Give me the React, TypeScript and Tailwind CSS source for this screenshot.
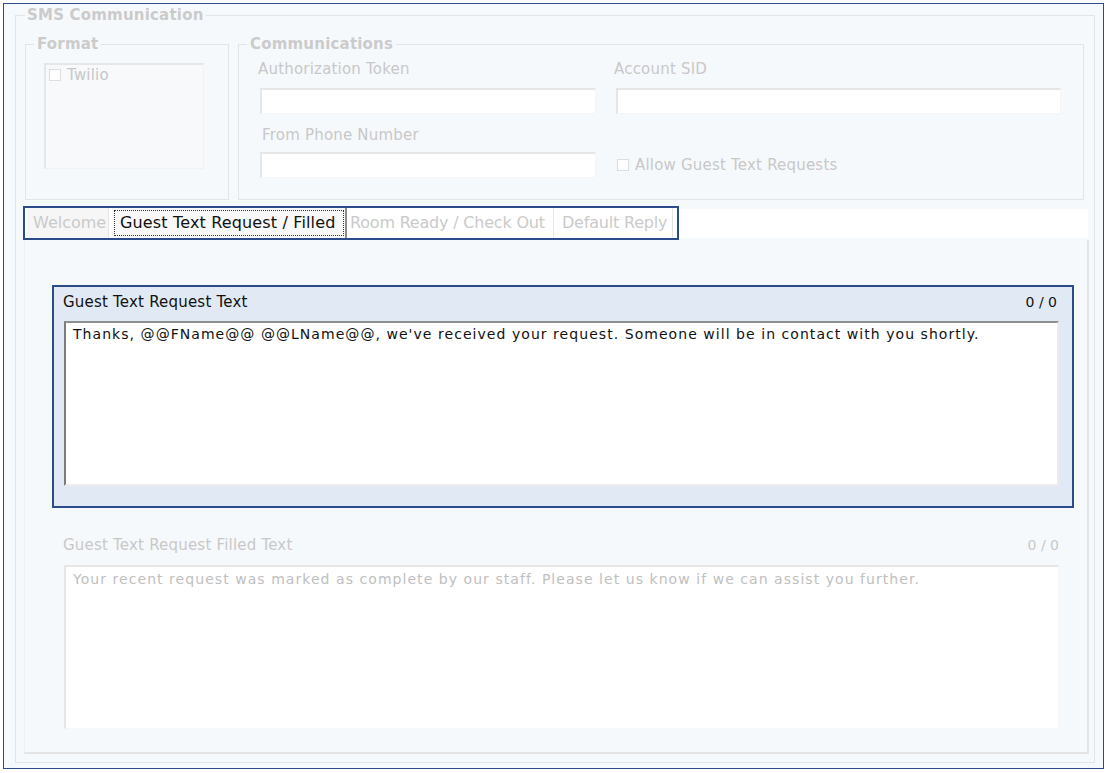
import React from "react";

const SANS = "font-['DejaVu_Sans',sans-serif]";
const LBL = "text-[15px] tracking-[0.2px] leading-[18px]";
const TAB = "text-[16px] whitespace-nowrap";

function Check({ label, className = "" }: { label: string; className?: string }) {
  return (
    <div className={`flex items-center ${className}`}>
      <span className="w-[12px] h-[12px] border border-[#dedede] bg-white shrink-0" />
      <span className={`ml-[6px] ${LBL} text-[#c8c8c8]`}>{label}</span>
    </div>
  );
}

function Input({ className = "" }: { className?: string }) {
  return (
    <div
      className={`h-[26px] bg-white border-t-2 border-l-2 border-t-[#e6e6e6] border-l-[#e6e6e6] border-r border-b border-r-[#f5f5f5] border-b-[#f5f5f5] ${className}`}
    />
  );
}

function Legend({ children, className = "" }: { children: React.ReactNode; className?: string }) {
  return (
    <legend className={`text-[15px] tracking-[0.2px] font-bold text-[#cbcbcb] leading-[18px] ${className}`}>
      {children}
    </legend>
  );
}

export default function App() {
  return (
    <div className={`w-[1108px] h-[773px] bg-white p-[3px] ${SANS}`}>
      <div className="h-[766px] w-[1101px] border border-[#2b4b8b] bg-[#f6f9fc] pl-[11px] pt-[2px]">
        <fieldset className="w-[1080px] h-[757px] border border-[#e1e5ea]">
          <Legend className="ml-[9px] px-[2px]">SMS Communication</Legend>
          <div className="flex gap-[9px] mt-[11px] ml-[9px]">
            <fieldset className="w-[204px] h-[165px] border border-[#e1e5ea]">
              <Legend className="ml-[8px] px-[3px]">Format</Legend>
              <div className="mt-[10px] ml-[18px] h-[106px] w-[160px] border-t-2 border-l-2 border-t-[#e6e6e6] border-l-[#e6e6e6] border-r border-b border-r-[#f2f2f2] border-b-[#f2f2f2] bg-[#f7f9fb] pl-[3px] pt-[1px]">
                <Check label="Twilio" />
              </div>
            </fieldset>
            <fieldset className="w-[846px] h-[165px] border border-[#e1e5ea]">
              <Legend className="ml-[8px] px-[3px]">Communications</Legend>
              <div className="grid grid-cols-[336px_445px] gap-x-[20px] mt-[7px] ml-[21px]">
                <div>
                  <div className={`${LBL} text-[#c8c8c8] -ml-[2px]`}>Authorization Token</div>
                  <Input className="mt-[10px]" />
                </div>
                <div>
                  <div className={`${LBL} text-[#c8c8c8] -ml-[2px]`}>Account SID</div>
                  <Input className="mt-[10px]" />
                </div>
                <div className="mt-[12px]">
                  <div className={`${LBL} text-[#c8c8c8] ml-[2px]`}>From Phone Number</div>
                  <Input className="mt-[8px]" />
                </div>
                <div className="mt-[12px] flex items-end pb-[4px] pl-[1px]">
                  <Check label="Allow Guest Text Requests" />
                </div>
              </div>
            </fieldset>
          </div>

          {/* Tab strip */}
          <div className="mt-[6px] ml-[7px] flex items-center h-[34px] mr-[5px]">
            <div className="w-[656px] h-[34px] border-2 border-[#2b4b8b] bg-white flex items-stretch">
              <div className={`ml-[2px] w-[82px] flex items-center pl-[6px] bg-[#f6f6f6] ${TAB} text-[#cacaca] border-r border-[#e6e6e6]`}>
                Welcome
              </div>
              <div className="ml-[3px] w-[235px] flex items-center bg-[#f8f8f8] pl-[2px] border-r-2 border-[#8c8c8c]">
                <span className={`h-[26px] w-[230px] flex items-center border border-dotted border-[#333] pl-[5px] ${TAB} tracking-[0.15px] text-[#111]`}>
                  Guest Text Request / Filled
                </span>
              </div>
              <div className={`pl-[3px] w-[207px] flex items-center ${TAB} tracking-[-0.2px] text-[#cacaca] border-r border-[#e6e6e6]`}>
                Room Ready / Check Out
              </div>
              <div className={`pl-[8px] w-[119px] flex items-center ${TAB} tracking-[-0.2px] text-[#cacaca] border-r border-[#e6e6e6]`}>
                Default Reply
              </div>
            </div>
            <div className="flex-1 h-[29px] bg-white mr-[1px]" />
          </div>

          {/* Tab panel */}
          <div className="ml-[8px] w-[1065px] h-[514px] border-l border-r-2 border-b-2 border-l-[#eef1f4] border-r-[#e4e4e4] border-b-[#e4e4e4] bg-[#f6f9fc] pl-[27px] pt-[45px]">
            <div className="w-[1022px] h-[223px] border-2 border-[#2b4b8b] bg-[#e1eaf4] pl-[9px] pr-[15px] pt-[6px]">
              <div className={`flex justify-between ${LBL} text-[#111]`}>
                <span>Guest Text Request Text</span>
                <span className="text-[14px] tracking-[0px]">0 / 0</span>
              </div>
              <div className="mt-[10px] ml-[1px] w-[995px] h-[165px] bg-white border-t-2 border-l-2 border-t-[#8e8e8e] border-l-[#7c7c7c] border-r-2 border-b-2 border-r-[#ececec] border-b-[#ececec] pl-[7px] pt-[2px] text-[14px] tracking-[1.05px] text-[#111] leading-[18px]">
                Thanks, @@FName@@ @@LName@@, we've received your request. Someone will be in contact with you shortly.
              </div>
            </div>
            <div className="w-[1022px] pl-[11px] pr-[15px] mt-[28px]">
              <div className={`flex justify-between ${LBL} text-[#c8c8c8]`}>
                <span>Guest Text Request Filled Text</span>
                <span className="text-[14px] tracking-[0px]">0 / 0</span>
              </div>
              <div className="mt-[11px] ml-[1px] w-[995px] h-[164px] bg-white border-t-2 border-l-2 border-t-[#e6e6e6] border-l-[#e6e6e6] border-r border-b border-r-[#f6f6f6] border-b-[#f6f6f6] pl-[7px] pt-[3px] text-[14px] tracking-[1.05px] text-[#c0c0c0] leading-[18px]">
                Your recent request was marked as complete by our staff. Please let us know if we can assist you further.
              </div>
            </div>
          </div>
        </fieldset>
      </div>
    </div>
  );
}
